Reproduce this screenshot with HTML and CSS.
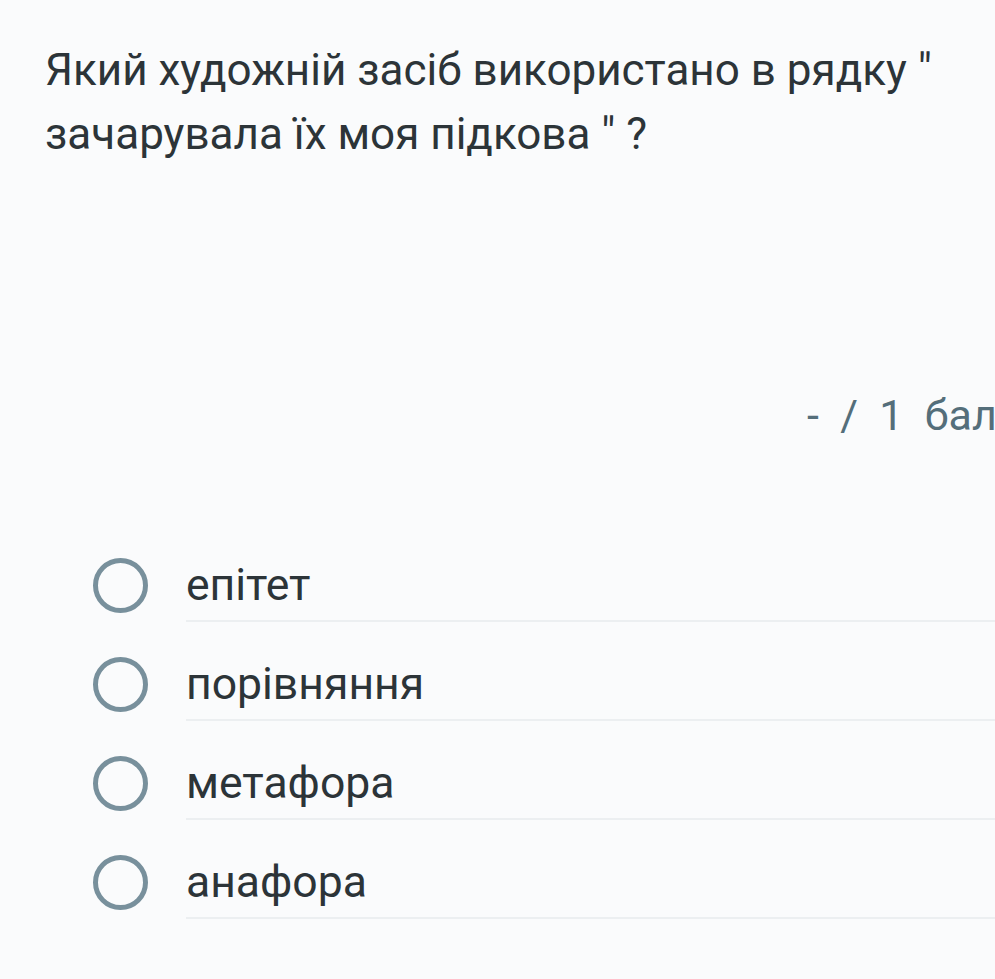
FILE: index.html
```html
<!DOCTYPE html>
<html lang="uk">
<head>
<meta charset="utf-8">
<link rel="stylesheet" href="styles.css">
</head>
<body>
<div class="page">
  <h1 class="question">Який художній засіб використано в рядку " зачарувала їх моя підкова " ?</h1>
  <div class="points">-&nbsp; /&nbsp; 1&nbsp; бал</div>
  <ul class="options">
    <li class="option"><span class="radio"></span><span class="label">епітет</span></li>
    <li class="option"><span class="radio"></span><span class="label">порівняння</span></li>
    <li class="option"><span class="radio"></span><span class="label">метафора</span></li>
    <li class="option"><span class="radio"></span><span class="label">анафора</span></li>
  </ul>
</div>
</body>
</html>
```
FILE: styles.css
```css
html, body {
  margin: 0;
  padding: 0;
  background: #fafbfc;
  overflow: hidden;
}
body {
  font-family: Roboto, "Noto Sans", sans-serif;
  color: #2c3438;
  width: 995px;
  height: 979px;
}
.page {
  padding: 38px 0 0 45px;
}
.question {
  margin: 0;
  width: 920px;
  font-size: 44px;
  font-weight: 400;
  line-height: 64px;
}
.points {
  margin-top: 224px;
  padding-left: 762px;
  white-space: nowrap;
  font-size: 43px;
  line-height: 50px;
  color: #546e7a;
}
.options {
  list-style: none;
  margin: 118px 0 0 0;
  padding: 0;
}
.option {
  display: flex;
  align-items: stretch;
  height: 99px;
}
.radio {
  flex: none;
  box-sizing: border-box;
  width: 55px;
  height: 55px;
  margin: 0 38px 0 48px;
  border: 5px solid #78909c;
  border-radius: 50%;
}
.label {
  flex: 1;
  height: 62px;
  border-bottom: 2px solid #eceff1;
  font-size: 44.5px;
  line-height: 54px;
  white-space: nowrap;
}
```
